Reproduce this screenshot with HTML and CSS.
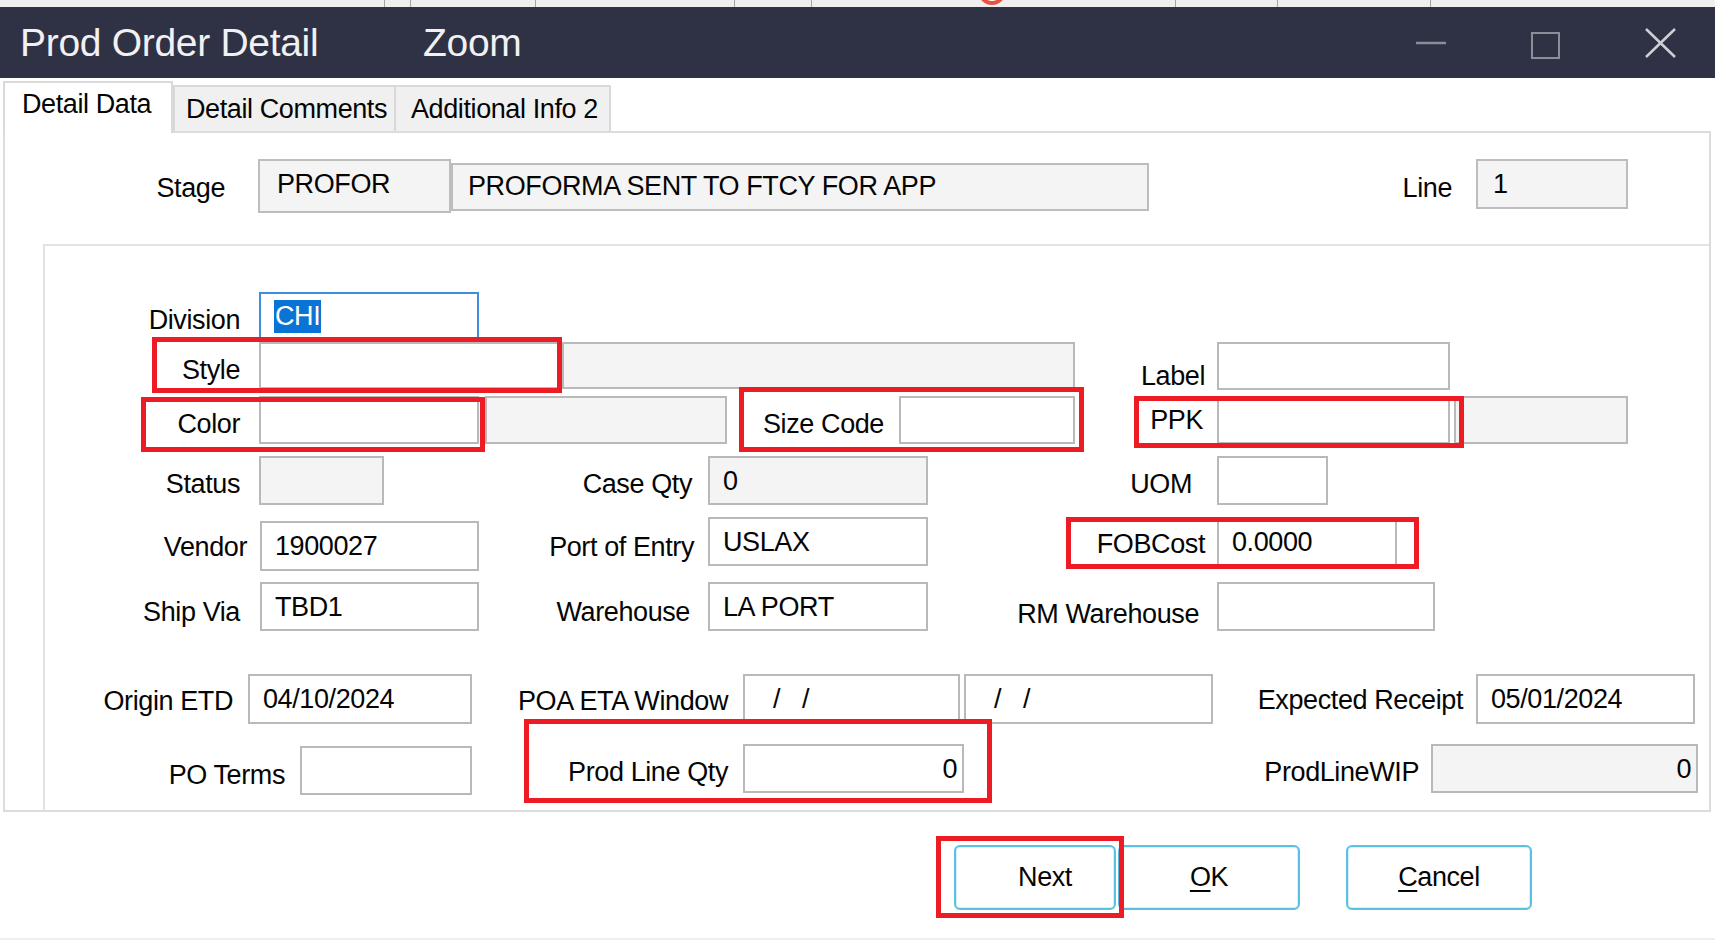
FILE: index.html
```html
<!DOCTYPE html>
<html lang="en">
<head>
<meta charset="utf-8">
<title>Prod Order Detail</title>
<link rel="stylesheet" href="styles.css">
</head>
<body>
<div class="screen">
  <div class="strip">
    <span class="tick s1"></span><span class="tick s2"></span><span class="tick s3"></span>
    <span class="tick s4"></span><span class="tick s5"></span><span class="dot s6"></span>
    <span class="tick s7"></span><span class="tick s8"></span><span class="tick s9"></span>
  </div>

  <div class="titlebar">
    <span class="title-main">Prod Order Detail</span>
    <span class="title-sub">Zoom</span>
    <div class="controls">
      <svg class="ic-min" width="30" height="4" viewBox="0 0 30 4"><line x1="0" y1="2" x2="30" y2="2" stroke="#8b8e99" stroke-width="2.5"/></svg>
      <svg class="ic-max" width="29" height="27" viewBox="0 0 29 27"><rect x="1" y="1" width="27" height="25" fill="none" stroke="#8b8e99" stroke-width="2"/></svg>
      <svg class="ic-close" width="31" height="30" viewBox="0 0 31 30"><path d="M1 1 L30 29 M30 1 L1 29" stroke="#cfd0d6" stroke-width="2.5" fill="none"/></svg>
    </div>
  </div>

  <div class="winbody">
    <div class="tabs">
      <div class="tab active">Detail Data</div>
      <div class="tab t2">Detail Comments</div>
      <div class="tab t3">Additional Info 2</div>
    </div>

    <div class="page">
      <div class="stage-row">
        <span class="lbl l-stage">Stage</span>
        <span class="box f-profor">PROFOR</span>
        <span class="box f-stagedesc">PROFORMA SENT TO FTCY FOR APP</span>
        <span class="lbl l-line">Line</span>
        <span class="box f-line">1</span>
      </div>

      <div class="group">
        <div class="row r1">
          <span class="lbl l-a">Division</span>
          <span class="fld focus f-div"><span class="sel">CHI</span></span>
        </div>

        <div class="row r2">
          <span class="lbl l-a">Style</span>
          <span class="fld f-style"></span>
          <span class="fld ro f-styledesc"></span>
          <span class="lbl l-label">Label</span>
          <span class="fld f-label"></span>
        </div>

        <div class="row r3">
          <span class="lbl l-a">Color</span>
          <span class="fld f-color"></span>
          <span class="fld ro f-colordesc"></span>
          <span class="lbl l-size">Size Code</span>
          <span class="fld f-size"></span>
          <span class="lbl l-ppk">PPK</span>
          <span class="fld f-ppk"></span>
          <span class="fld ro f-ppkdesc"></span>
        </div>

        <div class="row r4">
          <span class="lbl l-a">Status</span>
          <span class="fld ro f-status"></span>
          <span class="lbl l-caseqty">Case Qty</span>
          <span class="fld ro f-caseqty">0</span>
          <span class="lbl l-uom">UOM</span>
          <span class="fld f-uom"></span>
        </div>

        <div class="row r5">
          <span class="lbl l-vendor">Vendor</span>
          <span class="fld f-vendor">1900027</span>
          <span class="lbl l-port">Port of Entry</span>
          <span class="fld f-port">USLAX</span>
          <span class="lbl l-fob">FOBCost</span>
          <span class="fld f-fob">0.0000</span>
        </div>

        <div class="row r6">
          <span class="lbl l-a l-low">Ship Via</span>
          <span class="fld f-shipvia">TBD1</span>
          <span class="lbl l-wh">Warehouse</span>
          <span class="fld f-wh">LA PORT</span>
          <span class="lbl l-rmwh">RM Warehouse</span>
          <span class="fld f-rmwh"></span>
        </div>

        <div class="row r7">
          <span class="lbl l-origin">Origin ETD</span>
          <span class="fld f-origin">04/10/2024</span>
          <span class="lbl l-poa">POA ETA Window</span>
          <span class="fld date f-poa1"><span class="mask">/ /</span></span>
          <span class="fld date f-poa2"><span class="mask">/ /</span></span>
          <span class="lbl l-exp">Expected Receipt</span>
          <span class="fld f-exp">05/01/2024</span>
        </div>

        <div class="row r8">
          <span class="lbl l-poterms">PO Terms</span>
          <span class="fld f-poterms"></span>
          <span class="lbl l-plq">Prod Line Qty</span>
          <span class="fld num f-plq">0</span>
          <span class="lbl l-wip">ProdLineWIP</span>
          <span class="fld ro num f-wip">0</span>
        </div>
      </div>
    </div>

    <div class="buttons">
      <button class="btn b-next">Next</button>
      <button class="btn b-ok"><u>O</u>K</button>
      <button class="btn b-cancel"><u>C</u>ancel</button>
    </div>
  </div>

  <div class="mark m-style"></div>
  <div class="mark m-color"></div>
  <div class="mark m-size"></div>
  <div class="mark m-ppk"></div>
  <div class="mark m-fob"></div>
  <div class="mark m-plq"></div>
  <div class="mark m-next"></div>
</div>
</body>
</html>
```

FILE: styles.css
```css
* { box-sizing: border-box; }
html, body { margin: 0; padding: 0; }
body {
  width: 1715px;
  height: 940px;
  overflow: hidden;
  background: #ffffff;
  font-family: "Liberation Sans", Arial, sans-serif;
  font-size: 27px;
  letter-spacing: -0.4px;
  color: #050505;
}
.screen { position: relative; width: 1715px; height: 940px; }

/* background app strip */
.strip {
  height: 7px;
  background: #efefef;
  display: flex;
  align-items: flex-start;
  overflow: hidden;
}
.tick { flex: none; width: 1px; height: 7px; background: #a4a4a4; }
.dot { flex: none; width: 28px; height: 28px; border-radius: 50%; border: 4px solid #e8533f; background: #fff; margin-top: -23px; }
.s1 { margin-left: 384px; }
.s2 { margin-left: 25px; }
.s3 { margin-left: 124px; }
.s4 { margin-left: 198px; }
.s5 { margin-left: 76px; }
.s6 { margin-left: 166px; }
.s7 { margin-left: 169px; }
.s8 { margin-left: 101px; }
.s9 { margin-left: 152px; }

/* title bar */
.titlebar {
  height: 71px;
  background: #2f3244;
  color: #f1f1f3;
  display: flex;
  align-items: center;
}
.title-main { font-size: 39px; letter-spacing: -0.3px; margin-left: 20px; width: 403px; flex: none; }
.title-sub { font-size: 39px; letter-spacing: -0.3px; }
.controls { margin-left: auto; margin-right: 39px; display: flex; align-items: center; gap: 85px; }
.controls svg { display: block; flex: none; }
.ic-max { margin-top: 5px; }

/* window body */
.winbody {
  height: 862px;
  padding: 3px 0 0 3px;
  border-bottom: 2px solid #efefef;
}

/* tabs */
.tabs { display: flex; align-items: flex-end; height: 50px; }
.tab { flex: none; line-height: 30px; white-space: nowrap; }
.tab.active {
  width: 170px;
  height: 52px;
  margin-bottom: -2px;
  position: relative;
  z-index: 1;
  background: #fff;
  border: 2px solid #d9d9d9;
  border-bottom: none;
  padding: 6px 0 0 17px;
}
.tab.t2, .tab.t3 {
  height: 46px;
  background: #f0f0f0;
  border: 2px solid #d9d9d9;
  border-bottom: none;
  padding-top: 7px;
}
.tab.t2 { width: 223px; padding-left: 11px; }
.tab.t3 { width: 215px; border-left: none; padding-left: 15px; }

/* tab page */
.page {
  width: 1708px;
  height: 681px;
  border: 2px solid #dcdcdc;
  background: #fff;
}

.lbl {
  flex: none;
  text-align: right;
  line-height: 30px;
  padding-top: 13px;
  white-space: nowrap;
}
.box {
  flex: none;
  background: #f4f4f4;
  border: 2px solid #bdbdbd;
  line-height: 30px;
  white-space: nowrap;
}

.stage-row { display: flex; align-items: flex-start; margin-top: 26px; height: 54px; }
.l-stage { width: 220px; padding-top: 14px; }
.f-profor { margin-left: 33px; width: 193px; height: 54px; padding: 8px 0 0 17px; }
.f-stagedesc { margin-top: 4px; width: 698px; height: 48px; padding: 6px 0 0 15px; }
.l-line { width: 303px; padding-top: 14px; }
.f-line { margin-left: 24px; width: 152px; height: 50px; padding: 8px 0 0 15px; }

/* group */
.group {
  margin: 31px 0 0 38px;
  height: 566px;
  border-top: 2px solid #e3e3e3;
  border-left: 2px solid #e3e3e3;
}
.row { display: flex; align-items: flex-start; }

.fld {
  flex: none;
  display: flex;
  align-items: center;
  height: 48px;
  background: #fff;
  border: 2px solid #b9b9b9;
  padding-left: 13px;
  line-height: 30px;
  white-space: nowrap;
}
.fld.ro { background: #f4f4f4; }
.fld.num { justify-content: flex-end; padding: 0 5px 0 0; }
.fld.focus { border-color: #3d8ee0; }
.sel {
  display: inline-block;
  height: 33px;
  line-height: 33px;
  padding: 0 1px;
  background: #0a74d6;
  color: #fff;
}
.fld.date { padding-left: 28px; }
.mask { word-spacing: 10px; letter-spacing: 2px; }

.l-a { width: 195px; }

/* row 1 */
.r1 { margin-top: 46px; }
.f-div { margin-left: 19px; width: 220px; }

/* row 2 */
.r2 { margin-top: 2px; }
.f-style { margin-left: 19px; width: 301px; height: 47px; }
.f-styledesc { margin-left: 2px; width: 513px; height: 47px; }
.l-label { width: 130px; padding-top: 19px; }
.f-label { margin-left: 12px; width: 233px; }

/* row 3 */
.r3 { margin-top: 5px; }
.f-color { margin-left: 19px; width: 220px; }
.f-colordesc { margin-left: 6px; width: 242px; }
.l-size { width: 157px; }
.f-size { margin-left: 15px; width: 176px; }
.l-ppk { width: 128px; padding-top: 9px; }
.f-ppk { margin-left: 14px; width: 233px; }
.f-ppkdesc { margin-left: 4px; width: 174px; }

/* row 4 */
.r4 { margin-top: 12px; }
.r4 .fld { height: 49px; }
.f-status { margin-left: 19px; width: 125px; }
.l-caseqty { width: 308px; }
.f-caseqty { margin-left: 16px; width: 220px; }
.l-uom { width: 264px; }
.f-uom { margin-left: 25px; width: 111px; }

/* row 5 */
.r5 { margin-top: 12px; height: 54px; }
.r5 .fld { height: 49px; }
.l-vendor { width: 202px; padding-top: 15px; }
.r5 .f-vendor { margin-left: 13px; margin-top: 4px; width: 219px; height: 50px; }
.l-port { width: 215px; padding-top: 15px; }
.f-port { margin-left: 14px; width: 220px; }
.l-fob { width: 277px; padding-top: 12px; }
.f-fob { margin-left: 12px; width: 180px; }

/* row 6 */
.r6 { margin-top: 11px; }
.r6 .fld { height: 49px; }
.l-low { padding-top: 15px; }
.f-shipvia { margin-left: 20px; width: 219px; }
.l-wh { width: 211px; padding-top: 15px; }
.f-wh { margin-left: 18px; width: 220px; }
.l-rmwh { width: 271px; padding-top: 17px; }
.f-rmwh { margin-left: 18px; width: 218px; }

/* row 7 */
.r7 { margin-top: 43px; }
.r7 .fld { height: 50px; }
.l-origin { width: 188px; padding-top: 12px; }
.f-origin { margin-left: 15px; width: 224px; }
.l-poa { width: 256px; padding-top: 12px; }
.f-poa1 { margin-left: 15px; width: 217px; }
.f-poa2 { margin-left: 4px; width: 249px; }
.l-exp { width: 250px; padding-top: 11px; }
.f-exp { margin-left: 13px; width: 219px; }

/* row 8 */
.r8 { margin-top: 20px; }
.r8 .fld { height: 49px; }
.l-poterms { width: 240px; padding-top: 16px; }
.f-poterms { margin-left: 15px; margin-top: 2px; width: 172px; }
.l-plq { width: 256px; }
.f-plq { margin-left: 15px; width: 221px; }
.l-wip { width: 455px; }
.f-wip { margin-left: 12px; width: 267px; }

/* buttons */
.buttons { display: flex; align-items: flex-start; margin: 33px 0 0 951px; }
.btn {
  flex: none;
  height: 65px;
  background: #fff;
  border: 2px solid #5cc0e2;
  border-radius: 6px;
  font-family: "Liberation Sans", Arial, sans-serif;
  font-size: 27px;
  letter-spacing: -0.4px;
  color: #050505;
  padding: 0;
  display: flex;
  align-items: center;
  justify-content: center;
  box-shadow: inset 0 0 0 1px #d7f0f8;
}
.btn u { text-decoration-thickness: 2px; text-underline-offset: 4px; }
.b-next { width: 162px; padding-left: 20px; }
.b-ok { width: 182px; margin-left: 2px; }
.b-cancel { width: 186px; margin-left: 46px; }

/* red annotation overlays */
.mark { position: absolute; border: 5px solid #ed1c24; pointer-events: none; }
.m-style { left: 152px; top: 337px; width: 410px; height: 56px; }
.m-color { left: 141px; top: 397px; width: 344px; height: 55px; }
.m-size { left: 739px; top: 387px; width: 345px; height: 65px; }
.m-ppk { left: 1134px; top: 396px; width: 330px; height: 52px; }
.m-fob { left: 1066px; top: 517px; width: 353px; height: 52px; }
.m-plq { left: 524px; top: 719px; width: 468px; height: 84px; }
.m-next { left: 936px; top: 836px; width: 188px; height: 82px; }
```
